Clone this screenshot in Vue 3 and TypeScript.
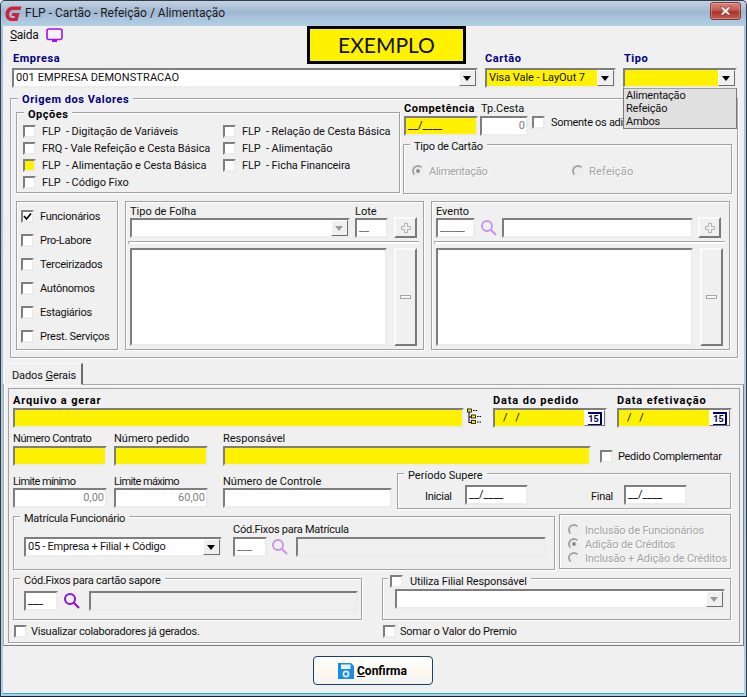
<script setup lang="ts">
const opcoes = [
  { t: 'FLP  - Digitação de Variáveis', y: false },
  { t: 'FRQ - Vale Refeição e Cesta Básica', y: false },
  { t: 'FLP  - Alimentação e Cesta Básica', y: true },
  { t: 'FLP  - Código Fixo', y: false },
  { t: 'FLP  - Relação de Cesta Básica', y: false },
  { t: 'FLP  - Alimentação', y: false },
  { t: 'FLP  - Ficha Financeira', y: false },
]
const tipos = [
  { t: 'Funcionários', c: true },
  { t: 'Pro-Labore', c: false },
  { t: 'Terceirizados', c: false },
  { t: 'Autônomos', c: false },
  { t: 'Estagiários', c: false },
  { t: 'Prest. Serviços', c: false },
]
const creditos = [
  { t: 'Inclusão de Funcionários', on: false },
  { t: 'Adição de Créditos', on: true },
  { t: 'Inclusão + Adição de Créditos', on: false },
]
</script>

<template>
  <div class="window">
    <header class="titlebar">
      <svg class="logo" width="17" height="17" viewBox="0 0 17 17">
        <path d="M16.5 1.5 L8 1.5 C3.5 1.5 .5 5 .5 9.5 C.5 13.5 3 16 7 16 L12.5 16 L14.5 8 L7.5 8 L6.5 11 L10 11 L9.4 13 L7.4 13 C5.2 13 4 11.6 4 9.5 C4 6.8 5.8 5 8.3 5 L15.5 5 Z" fill="#cc2440" />
      </svg>
      <span class="title-text">FLP - Cartão - Refeição / Alimentação</span>
      <button class="close" type="button" aria-label="Fechar">
        <svg width="15" height="10" viewBox="0 0 15 10">
          <path d="M2 1 L5 1 L7.5 3.2 L10 1 L13 1 L9.5 5 L13 9 L10 9 L7.5 6.8 L5 9 L2 9 L5.5 5 Z" fill="#f4f0f0" stroke="#6e3a3a" stroke-width=".6" />
        </svg>
      </button>
    </header>

    <main class="client">
      <section class="top">
        <div class="top-left">
          <div class="menu">
            <span><u>S</u>aida</span>
            <svg width="17" height="15" viewBox="0 0 17 15">
              <rect x="1" y="1" width="15" height="10.5" rx="2" fill="#f6f2fc" stroke="#a010f0" stroke-width="1.6" />
              <rect x="6" y="12" width="5" height="2" fill="#a010f0" />
            </svg>
          </div>
          <label class="lb-navy">Empresa</label>
        </div>
        <div class="exemplo">EXEMPLO</div>
        <label class="lb-navy lb-cartao">Cartão</label>
        <label class="lb-navy lb-tipo">Tipo</label>

        <div class="f combo empresa">
          <span>001 EMPRESA DEMONSTRACAO</span>
          <i class="arrow"></i>
        </div>
        <div class="f combo yellow cartao">
          <span class="ls0">Visa Vale - LayOut 7</span>
          <i class="arrow"></i>
        </div>
        <div class="f combo yellow tipo">
          <span></span>
          <i class="arrow"></i>
        </div>
      </section>

      <ul class="droplist">
        <li>Alimentação</li>
        <li>Refeição</li>
        <li>Ambos</li>
      </ul>

      <section class="grp origem">
        <span class="legend lb-navy leg-origem">Origem dos Valores</span>
        <div class="origem-top">
          <div class="grp opcoes">
            <span class="legend lb-bold leg-opcoes">Opções</span>
            <div class="opcoes-grid">
              <div v-for="o in opcoes" :key="o.t" class="chk-row">
                <i class="cb" :class="{ 'cb-y': o.y }"></i>
                <span class="pre">{{ o.t }}</span>
              </div>
            </div>
          </div>
          <div class="comp">
            <div class="comp-row">
              <div class="stack w74">
                <label class="lb-bold lh14">Competência</label>
                <div class="f yellow mask">__/____</div>
              </div>
              <div class="stack w48">
                <label class="lh14">Tp.Cesta</label>
                <div class="f num">0</div>
              </div>
              <div class="chk-row somente">
                <i class="cb"></i>
                <span>Somente os adi</span>
              </div>
            </div>
            <div class="grp cartao-tipo">
              <span class="legend leg-tipo">Tipo de Cartão</span>
              <div class="radio-row r1"><i class="rd on"></i><span class="dis">Alimentação</span></div>
              <div class="radio-row r2"><i class="rd"></i><span class="dis">Refeição</span></div>
            </div>
          </div>
        </div>

        <div class="origem-bot">
          <div class="grp panel p-tipos">
            <div v-for="t in tipos" :key="t.t" class="chk-row tipo-row">
              <i class="cb">
                <svg v-if="t.c" width="9" height="9" viewBox="0 0 9 9"><path d="M1 4 L3.5 7 L8 1.5" fill="none" stroke="#000" stroke-width="1.7" /></svg>
              </i>
              <span>{{ t.t }}</span>
            </div>
          </div>

          <div class="grp panel p-list">
            <div class="sel-row folha">
              <div class="stack">
                <label class="lh13">Tipo de Folha</label>
                <div class="f combo"><span></span><i class="arrow dim"></i></div>
              </div>
              <div class="stack">
                <label class="lh13">Lote</label>
                <div class="f mask under">__</div>
              </div>
              <button class="btn plus" type="button" aria-label="Adicionar">
                <svg width="10" height="10" viewBox="0 0 11 11"><path d="M4 .5 H7 V4 H10.5 V7 H7 V10.5 H4 V7 H.5 V4 H4 Z" fill="#f8f8f8" stroke="#a4a4a4" /></svg>
              </button>
            </div>
            <div class="sep"></div>
            <div class="list-row">
              <div class="f listbox"></div>
              <button class="btn tall" type="button" aria-label="Remover"><i class="ic-minus"></i></button>
            </div>
          </div>

          <div class="grp panel p-list">
            <div class="sel-row evento">
              <div class="stack">
                <label class="lh13">Evento</label>
                <div class="f mask under">_____</div>
              </div>
              <svg class="lens" width="18" height="18" viewBox="0 0 18 18">
                <circle cx="7" cy="7" r="5" fill="none" stroke="#c890f0" stroke-width="1.8" />
                <path d="M10.8 10.8 L16 16" stroke="#c890f0" stroke-width="2" />
              </svg>
              <div class="f field-end"></div>
              <button class="btn plus" type="button" aria-label="Adicionar">
                <svg width="10" height="10" viewBox="0 0 11 11"><path d="M4 .5 H7 V4 H10.5 V7 H7 V10.5 H4 V7 H.5 V4 H4 Z" fill="#f8f8f8" stroke="#a4a4a4" /></svg>
              </button>
            </div>
            <div class="sep"></div>
            <div class="list-row">
              <div class="f listbox"></div>
              <button class="btn tall" type="button" aria-label="Remover"><i class="ic-minus"></i></button>
            </div>
          </div>
        </div>
      </section>

      <div class="tabstrip">
        <div class="tab">Dados <u>G</u>erais</div>
      </div>

      <section class="tabpage">
        <div class="page">
          <div class="row row-a">
            <div class="stack">
              <label class="lb-bold wide lh14">Arquivo a gerar</label>
              <div class="f yellow"></div>
            </div>
            <svg class="tree" width="16" height="17" viewBox="0 0 16 17">
              <path d="M2 3 V15 M2 9 H5 M2 14.5 H5" stroke="#000" fill="none" />
              <rect x="0.5" y="1" width="4" height="3" fill="#fff200" stroke="#000" stroke-width=".8" />
              <rect x="4.5" y="7" width="4" height="3" fill="#fff200" stroke="#000" stroke-width=".8" />
              <rect x="4.5" y="12.5" width="4" height="3" fill="#fff200" stroke="#000" stroke-width=".8" />
              <path d="M6 2.5 H10 M10 8.5 H15 M10 14 H15" stroke="#000" stroke-dasharray="1.5 1" fill="none" />
            </svg>
            <div class="stack">
              <label class="lb-bold wide lh14">Data do pedido</label>
              <div class="f yellow date">
                <span class="slashes">/ /</span>
                <button class="cal" type="button"><span>15</span></button>
              </div>
            </div>
            <div class="stack">
              <label class="lb-bold wide lh14">Data efetivação</label>
              <div class="f yellow date">
                <span class="slashes">/ /</span>
                <button class="cal" type="button"><span>15</span></button>
              </div>
            </div>
          </div>

          <div class="row row-b">
            <div class="stack">
              <label class="lh14 ls-a">Número Contrato</label>
              <div class="f yellow"></div>
            </div>
            <div class="stack">
              <label class="lh14">Número pedido</label>
              <div class="f yellow"></div>
            </div>
            <div class="stack">
              <label class="lh14">Responsável</label>
              <div class="f yellow"></div>
            </div>
            <div class="chk-row pedido">
              <i class="cb"></i>
              <span>Pedido Complementar</span>
            </div>
          </div>

          <div class="row row-c">
            <div class="stack pt1">
              <label class="lh14 low ls-b">Limite mínimo</label>
              <div class="f num">0,00</div>
            </div>
            <div class="stack pt1">
              <label class="lh14 low ls-b">Limite máximo</label>
              <div class="f num">60,00</div>
            </div>
            <div class="stack pt1">
              <label class="lh14 low">Número de Controle</label>
              <div class="f"></div>
            </div>
            <div class="grp periodo">
              <span class="legend leg-periodo">Período Supere</span>
              <span class="per-lb">Inicial</span>
              <div class="f mask per-in">__/____</div>
              <span class="per-lb per-final">Final</span>
              <div class="f mask per-in">__/____</div>
            </div>
          </div>

          <div class="row row-d">
            <div class="grp matricula">
              <span class="legend leg-mat ls-c">Matrícula Funcionário</span>
              <div class="f combo mat-sel">
                <span class="ls-c">05 - Empresa + Filial + Código</span>
                <i class="arrow"></i>
              </div>
              <div class="stack">
                <label class="lh14 ls-c">Cód.Fixos para Matrícula</label>
                <div class="mat-line">
                  <div class="f mask under in34">___</div>
                  <svg class="lens" width="18" height="18" viewBox="0 0 18 18">
                    <circle cx="7" cy="7" r="5" fill="none" stroke="#c890f0" stroke-width="1.8" />
                    <path d="M10.8 10.8 L16 16" stroke="#c890f0" stroke-width="2" />
                  </svg>
                  <div class="f ro mat-end"></div>
                </div>
              </div>
            </div>
            <div class="grp creditos">
              <div v-for="c in creditos" :key="c.t" class="radio-row cred-row">
                <i class="rd" :class="{ on: c.on }"></i>
                <span class="dis">{{ c.t }}</span>
              </div>
            </div>
          </div>

          <div class="row row-e">
            <div class="grp sapore">
              <span class="legend leg-mat ls-c">Cód.Fixos para cartão sapore</span>
              <div class="f mask under dark in34">___</div>
              <svg class="lens" width="18" height="18" viewBox="0 0 18 18">
                <circle cx="7" cy="7" r="5" fill="none" stroke="#8c10d8" stroke-width="2" />
                <path d="M10.8 10.8 L16 16" stroke="#8c10d8" stroke-width="2.2" />
              </svg>
              <div class="f ro sap-end"></div>
            </div>
            <div class="grp filial">
              <div class="legend leg-filial chk-row">
                <i class="cb"></i>
                <span>Utiliza Filial Responsável</span>
              </div>
              <div class="f combo"><span></span><i class="arrow dim"></i></div>
            </div>
          </div>

          <div class="row row-f">
            <div class="chk-row"><i class="cb"></i><span>Visualizar colaboradores já gerados.</span></div>
            <div class="chk-row"><i class="cb"></i><span>Somar o Valor do Premio</span></div>
          </div>
        </div>
      </section>

      <footer class="foot">
        <button class="confirm" type="button">
          <svg width="16" height="16" viewBox="0 0 16 16">
            <path d="M0 0 H13 L16 3 V16 H0 Z" fill="#1c8ae8" />
            <rect x="3" y="1.5" width="9.5" height="4.5" fill="#e8f4fc" />
            <circle cx="8" cy="11" r="2.6" fill="none" stroke="#e8f4fc" stroke-width="1.6" />
          </svg>
          <span><u>C</u>onfirma</span>
        </button>
      </footer>
    </main>
  </div>
</template>

<style>
html, body { margin: 0; padding: 0; background: #f0f0f0; }
</style>

<style scoped>
* { box-sizing: border-box; }
.window {
  width: 747px; height: 697px; overflow: hidden;
  display: flex; flex-direction: column;
  background: linear-gradient(#aac2d8, #aed0e2);
  border: 1px solid #2e3c4c; border-bottom-color: #12222e;
  border-radius: 5px 5px 0 0;
  font: 11px/13px Roboto, "Liberation Sans", sans-serif;
  color: #111;
}
.titlebar {
  flex: 0 0 25px; display: flex; align-items: center;
  padding: 0 5px 0 4px;
  background: linear-gradient(#c4d2e2 0, #a0b6d0 45%, #a9c4dc 70%, #b0d0e2 100%);
}
.logo { margin-top: -1px; }
.title-text { margin-left: 3px; font-size: 12px; color: #1a1a1a; }
.close {
  margin-left: auto; margin-top: -5px; width: 31px; height: 18px; padding: 0;
  border: 1px solid #7a3a3a; border-radius: 3px;
  background: linear-gradient(#d8827a 0, #c65a50 45%, #a8302c 55%, #c8604e 100%);
  display: flex; align-items: center; justify-content: center;
  box-shadow: inset 0 0 0 1px rgba(255,255,255,.25);
}
.client {
  flex: 1; margin: 0 2px 2px 2px; background: #f0f0f0; position: relative;
  display: flex; flex-direction: column;
  border-bottom: 1px solid #20b0d8;
}
label { display: block; }
i { display: block; font-style: normal; }
.lb-navy { font-weight: 700; color: #000080; letter-spacing: .55px; }
.lb-bold { font-weight: 700; color: #000; letter-spacing: .5px; }
.lb-bold.wide { letter-spacing: .85px; }
.lh14 { height: 14px; line-height: 13px; }
.lh13 { height: 13px; line-height: 13px; }
.low { line-height: 15px; }
.ls0 { letter-spacing: -.05px; }
.ls-a { letter-spacing: -.4px; }
.ls-b { letter-spacing: -.6px; }
.ls-c { letter-spacing: -.25px; }
.stack { display: flex; flex-direction: column; min-width: 0; }

/* sunken field */
.f {
  height: 20px; background: #fff; overflow: hidden;
  border: 2px solid; border-color: #7e7e7e #ececec #ececec #7e7e7e;
  line-height: 15px; padding-left: 1px; white-space: nowrap;
}
.yellow { background: #fff200; }
.ro { background: #f0f0f0; }
.num { text-align: right; padding-right: 1px; color: #808080; line-height: 16px; }
.mask { color: #000; padding-left: 2px; }
.under { color: #666; }
.under.dark { color: #000; }
.combo { display: flex; justify-content: space-between; align-items: stretch; }
.combo span { padding: 0 1px; line-height: 16px; }
.arrow {
  width: 17px; flex: none; background: #f0f0f0; position: relative;
  border: 1px solid; border-color: #fff #6e6e6e #6e6e6e #fff;
}
.arrow::after {
  content: ""; position: absolute; left: 3px; top: 5px;
  border: 4px solid transparent; border-top: 5px solid #000; border-bottom: 0;
}
.arrow.dim::after { border-top-color: #9a9a9a; }

/* groups */
.grp { border: 1px solid #a2a2a2; box-shadow: 1px 1px 0 #fff, inset 1px 1px 0 #fff; position: relative; }
.legend { position: absolute; background: #f0f0f0; padding: 0 4px; line-height: 13px; white-space: nowrap; }

/* checkbox & radio */
.chk-row { display: flex; align-items: center; white-space: nowrap; }
.pre { white-space: pre; }
.cb {
  width: 13px; height: 13px; flex: none; background: #fff;
  border: 2px solid; border-color: #7e7e7e #ececec #ececec #7e7e7e;
  display: flex; align-items: center; justify-content: center;
}
.cb svg { flex: none; margin: -1px; }
.cb-y { background: #fff200; }
.radio-row { display: flex; align-items: center; white-space: nowrap; }
.rd {
  width: 12px; height: 12px; flex: none; border-radius: 50%; background: #ededed;
  border: 2px solid; border-color: #a4a4a4 #ececec #ececec #a4a4a4; position: relative;
}
.rd.on::after {
  content: ""; position: absolute; left: 2px; top: 2px; width: 4px; height: 4px;
  border-radius: 50%; background: #8e8e8e;
}
.dis { color: #a4a4a4; text-shadow: 1px 1px 0 #fbfbfb; }

/* top */
.top {
  display: grid; margin-left: 9px;
  grid-template-columns: 295px 159px 19px 138px 114px;
  grid-template-rows: 42px 20px;
}
.top-left { display: flex; flex-direction: column; justify-content: space-between; padding-left: 1px; padding-bottom: 3px; }
.menu { display: flex; align-items: center; gap: 8px; margin-left: -3px; margin-top: 2px; letter-spacing: -.3px; font-size: 12px; }
.exemplo {
  background: #fff200; border: 3px solid #000; height: 38px;
  font: 21px/31px Lato, "Open Sans", sans-serif; text-align: center; color: #111;
}
.lb-cartao { grid-column: 4; align-self: end; padding-bottom: 3px; }
.lb-tipo { grid-column: 5; align-self: end; padding-bottom: 3px; padding-left: 1px; }
.empresa { grid-column: 1 / span 3; width: 466px; }
.empresa span { letter-spacing: .1px; }
.cartao { grid-column: 4; width: 131px; }
.tipo { grid-column: 5; width: 114px; }
.droplist {
  position: absolute; left: 620px; top: 62px; z-index: 3; width: 114px; height: 41px;
  list-style: none; margin: 0; padding: 0 2px; background: #e0e0e0;
  border: 1px solid #7a7a7a; border-top-color: #a0a0a0;
  line-height: 13px; letter-spacing: -.2px;
}

/* origem */
.origem { margin: 10px 0 0 7px; width: 728px; height: 260px; padding: 3px 0 0 5px; }
.leg-origem { left: 7px; top: -6px; }
.origem-top { display: flex; height: 92px; }
.opcoes { width: 384px; height: 81px; margin-top: 10px; flex: none; }
.leg-opcoes { left: 7px; top: -5px; }
.opcoes-grid {
  display: grid; grid-auto-flow: column;
  grid-template-rows: repeat(4, 17px); grid-template-columns: 200px 1fr;
  padding: 10px 0 0 6px; letter-spacing: -.08px;
}
.opcoes-grid .chk-row span { margin-left: 6px; }
.comp { margin-left: 3px; flex: 1; min-width: 0; position: relative; }
.comp-row { display: flex; height: 34px; }
.w74 { width: 74px; margin-left: 1px; }
.w48 { width: 48px; margin-left: 2px; }
.w48 label { padding-left: 1px; }
.somente { margin: 14px 0 0 4px; align-self: flex-start; letter-spacing: -.3px; }
.somente span { margin-left: 6px; }
.cartao-tipo {
  margin-top: 8px; width: 329px; height: 50px;
  display: flex; align-items: center; padding: 0 0 0 8px;
}
.leg-tipo { left: 6px; top: -5px; letter-spacing: -.25px; }
.r1 { width: 160px; margin-top: 4px; letter-spacing: -.3px; }
.r2 { margin-top: 4px; letter-spacing: .2px; }
.radio-row .dis { margin-left: 5px; }
.origem-bot { display: flex; gap: 7px; margin-top: 7px; }
.panel { height: 149px; }
.p-tipos { width: 102px; padding: 2px 0 0 4px; }
.tipo-row { height: 24px; letter-spacing: -.25px; }
.tipo-row span { margin-left: 6px; }
.p-list { width: 299px; padding: 3px 0 0 4px; }
.sel-row { display: grid; align-items: end; }
.folha { grid-template-columns: 220px 33px 23px; column-gap: 5px; }
.folha .plus { margin-left: 1px; }
.evento { grid-template-columns: 39px 23px 193px 23px; column-gap: 1px; }
.evento .lens { margin: 0 0 1px 4px; }
.evento .field-end { margin-left: 2px; }
.evento .btn { margin-left: 4px; }
.btn {
  padding: 0; background: #f0f0f0; display: flex; align-items: center; justify-content: center;
  border: 2px solid; border-color: #fafafa #7a7a7a #7a7a7a #fafafa;
}
.plus { height: 21px; width: 23px; }
.ic-minus { width: 11px; height: 4px; background: #f8f8f8; border: 1px solid #a4a4a4; }
.sep { height: 3px; margin: 3px 0 0 -2px; width: 291px; border-top: 1px solid #a8a8a8; border-left: 1px solid #a8a8a8; box-shadow: inset 0 2px 0 #fff; }
.list-row { display: flex; gap: 7px; margin-top: 4px; height: 98px; }
.listbox { height: 98px; flex: 0 0 257px; }
.tall { flex: 0 0 23px; height: 98px; }

/* tabs */
.tabstrip { margin-top: 5px; height: 21px; padding-left: 1px; display: flex; }
.tab {
  width: 79px; height: 22px; padding: 5px 0 0 7px; background: #f0f0f0; position: relative; z-index: 1;
  border: 1px solid; border-color: #fafafa #6e6e6e transparent #fafafa; border-right-width: 2px;
  letter-spacing: -.1px;
}
.tabpage {
  height: 262px; padding: 3px 3px 0 4px;
  border: 1px solid; border-color: #a8a8a8 #808080 #808080 #a8a8a8;
  box-shadow: inset 1px 1px 0 #fff;
}
.page {
  height: 255px; padding: 5px 0 0 4px; border: 1px solid #a2a2a2;
  box-shadow: 0 1px 0 #fff;
}
.row { display: grid; }
.row-a { grid-template-columns: 451px 29px 114px 125px; }
.row-a .stack:last-child { margin-left: 10px; width: 115px; }
.tree { margin: 14px 0 0 3px; }
.date { display: flex; justify-content: space-between; }
.slashes { padding-left: 7px; letter-spacing: 2.5px; line-height: 16px; color: #000; }
.cal {
  width: 21px; padding: 0; background: #fafafa; color: #000060;
  border: 1px solid; border-color: #fff #707070 #707070 #fff; display: flex; align-items: center; justify-content: center;
}
.cal span {
  display: block; width: 14px; height: 13px; border: 1px solid #000060; border-width: 2px 2px 1px 0;
  font: 700 9px/10px Roboto, sans-serif; text-align: center;
}
.row-b { margin-top: 4px; grid-template-columns: 94px 101px 383px auto; }
.row-b > :nth-child(2) { margin-left: 7px; }
.row-b > :nth-child(3) { margin-left: 15px; }
.pedido { margin: 18px 0 0 9px; align-self: start; letter-spacing: -.3px; }
.pedido span { margin-left: 5px; }
.row-c { margin-top: 7px; grid-template-columns: 94px 101px 184px 339px; height: 36px; }
.row-c > :nth-child(2) { padding-left: 7px; }
.row-c > :nth-child(3) { padding-left: 15px; }
.pt1 { padding-top: 1px; }
.periodo { width: 334px; height: 36px; margin-left: 5px; display: flex; align-items: center; padding: 10px 0 0 27px; }
.leg-periodo { left: 6px; top: -5px; }
.per-lb { width: 40px; letter-spacing: -.3px; }
.per-final { margin-left: 63px; width: 33px; }
.per-in { width: 63px; margin-top: -3px; }
.row-d { margin-top: 5px; grid-template-columns: 546px 172px; height: 56px; }
.matricula { width: 542px; height: 54px; margin-top: 2px; display: flex; align-items: flex-start; padding: 6px 0 0 10px; }
.leg-mat { left: 6px; top: -5px; }
.mat-sel { width: 198px; margin-top: 14px; margin-right: 11px; }
.mat-line { display: flex; align-items: center; }
.in34 { width: 34px; flex: none; }
.mat-line .lens { margin: 0 0 0 4px; flex: none; }
.sapore .lens { margin: 1px 0 0 5px; flex: none; }
.mat-end { width: 250px; margin-left: 7px; }
.creditos { width: 172px; height: 55px; padding: 8px 0 0 8px; }
.cred-row { height: 14px; letter-spacing: -.13px; }
.row-e { margin-top: 8px; grid-template-columns: 369px 349px; height: 42px; }
.sapore { width: 349px; height: 42px; display: flex; padding: 12px 0 0 10px; align-items: flex-start; }
.sap-end { width: 269px; margin-left: 8px; }
.filial { width: 349px; height: 42px; padding: 10px 5px 0 12px; }
.leg-filial { left: 5px; top: -4px; padding: 0 4px 0 2px; }
.leg-filial span { margin-left: 7px; letter-spacing: -.15px; }
.row-f { margin-top: 4px; margin-left: 1px; grid-template-columns: 369px 349px; height: 14px; letter-spacing: -.25px; }
.row-f .chk-row span { margin-left: 4px; }

/* footer */
.foot { margin-top: 10px; padding-left: 310px; }
.confirm {
  width: 120px; height: 29px; padding: 0 0 0 24px; display: flex; align-items: center; gap: 3px;
  border: 1px solid #16406e; border-radius: 4px;
  background: linear-gradient(#fff 0, #fdf8f0 50%, #f4f4f4 100%);
  font: 700 12px/14px Roboto, sans-serif; color: #000;
}
</style>
